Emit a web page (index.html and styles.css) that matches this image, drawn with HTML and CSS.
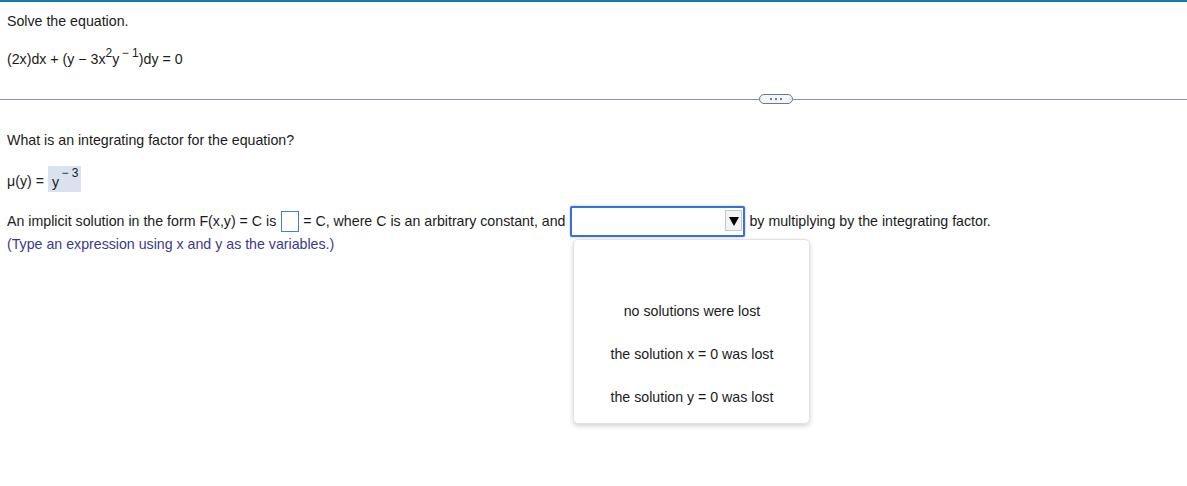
FILE: index.html
```html
<!DOCTYPE html>
<html>
<head>
<meta charset="utf-8">
<link rel="stylesheet" href="styles.css">
</head>
<body>
<div class="topbar"></div>
<div class="question">
  <p class="line l1">Solve the equation.</p>
  <p class="line l2">(2x)dx + (y &minus; 3x<sup>2</sup>y<sup>&thinsp;&minus; 1</sup>)dy = 0</p>
</div>
<div class="divider">
  <div class="rule"></div>
  <div class="pill"><span></span><span></span><span></span></div>
  <div class="rule"></div>
</div>
<div class="answer">
  <p class="line l3">What is an integrating factor for the equation?</p>
  <p class="line l4">&mu;(y) = <span class="given">y<sup>&thinsp;&minus; 3</sup></span></p>
  <div class="line l5">
    <span>An implicit solution in the form F(x,y) = C is</span>
    <span class="blank"></span>
    <span>= C, where C is an arbitrary constant, and</span>
    <span class="select-wrap">
      <span class="select"><span class="arrow"></span></span>
      <span class="menu">
        <span class="opt">no solutions were lost</span>
        <span class="opt">the solution x = 0 was lost</span>
        <span class="opt">the solution y = 0 was lost</span>
      </span>
    </span>
    <span>by multiplying by the integrating factor.</span>
  </div>
  <p class="line hint">(Type an expression using x and y as the variables.)</p>
</div>
</body>
</html>
```
FILE: styles.css
```css
html, body {
  margin: 0;
  padding: 0;
  background: #ffffff;
}
html { min-height: 486px; }
body {
  min-height: 486px;
  font-family: "Liberation Sans", Arial, sans-serif;
  font-size: 14.2px;
  color: #1b1b1b;
}
.topbar {
  height: 2px;
  background: #0b7ea8;
}
.question {
  padding: 0 0 0 7px;
}
.line {
  margin: 0;
  line-height: 17px;
}
.l1 { padding-top: 11px; }
.l2 { padding-top: 21px; }
sup {
  font-size: 12px;
  line-height: 0;
  vertical-align: 7px;
}
.divider {
  display: flex;
  align-items: center;
  margin-top: 26px;
  height: 10px;
}
.rule {
  flex: 1;
  height: 1px;
  background: #8a92a3;
}
.rule:first-child { flex: 0 0 759px; }
.pill {
  width: 32px;
  height: 8px;
  border: 1px solid #6e7788;
  border-radius: 5px;
  background: #f1f4f8;
  display: flex;
  justify-content: center;
  align-items: center;
  gap: 3px;
}
.pill span {
  width: 2px;
  height: 2px;
  background: #4a5263;
  border-radius: 1px;
}
.answer {
  padding-left: 7px;
}
.l3 { padding-top: 28px; }
.l4 {
  margin-top: 17px;
  height: 26px;
  display: flex;
  align-items: flex-end;
  gap: 4px;
  line-height: 22px;
}
.given {
  display: inline-block;
  background: #dae2ef;
  height: 26px;
  padding: 0 3px 0 4px;
  box-sizing: border-box;
  line-height: 33px;
}
.given sup { vertical-align: 10px; }
.l5 {
  margin-top: 13px;
  display: flex;
  align-items: center;
  gap: 4px;
  height: 32px;
}
.blank {
  display: inline-block;
  width: 16px;
  height: 19px;
  border: 1px solid #3f7fd8;
  margin: 0 0 0 1px;
}
.select-wrap {
  position: relative;
  display: inline-block;
  margin-left: 1px;
}
.select {
  display: block;
  width: 171px;
  height: 27px;
  border: 2px solid #3d70d6;
  border-radius: 2px;
  box-shadow: 0 0 2px rgba(60, 110, 210, 0.6);
  position: relative;
  background: #fff;
}
.arrow {
  position: absolute;
  right: 1px;
  top: 2px;
  width: 17px;
  height: 21px;
  background: #f3f3f3;
  border: 1px solid #c8c8c8;
  box-sizing: border-box;
}
.arrow::after {
  content: "";
  position: absolute;
  left: 3px;
  top: 6px;
  border-left: 5px solid transparent;
  border-right: 5px solid transparent;
  border-top: 9px solid #000;
}
.menu {
  position: absolute;
  left: 3px;
  top: 33px;
  width: 237px;
  height: 185px;
  background: #fff;
  border: 1px solid #e2e2e2;
  border-radius: 5px;
  box-shadow: 0 2px 5px rgba(0, 0, 0, 0.18);
  box-sizing: border-box;
  display: flex;
  flex-direction: column;
  align-items: center;
  padding-top: 63px;
  gap: 26px;
  z-index: 2;
}
.opt {
  display: block;
  line-height: 17px;
  color: #1b1b1b;
  white-space: nowrap;
}
.hint {
  margin-top: -1px;
  color: #3a3a8c;
}
```
